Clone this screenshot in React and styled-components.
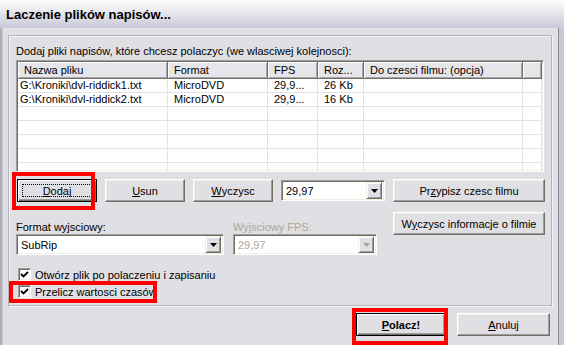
import React from 'react';
import styled, { createGlobalStyle, css } from 'styled-components';

const FONT = `"Liberation Sans", Arial, sans-serif`;

const GlobalStyle = createGlobalStyle`
  html, body {
    margin: 0;
    padding: 0;
    background: #ffffff;
  }
  * {
    box-sizing: border-box;
  }
`;

const Window = styled.div`
  position: relative;
  width: 564px;
  height: 345px;
  overflow: hidden;
  display: flex;
  flex-direction: column;
  font-family: ${FONT};
  font-size: 11px;
  color: #000;
`;

const TitleBar = styled.div`
  height: 28px;
  flex-shrink: 0;
  display: flex;
  align-items: center;
  padding: 1px 0 0 6px;
  border-top-left-radius: 3px;
  border-top-right-radius: 8px;
  background: linear-gradient(to bottom, #fdfdfe 0%, #f1f1f5 25%, #dddde6 62%, #c9c9d6 100%);
  font-weight: bold;
  font-size: 13px;
`;

const Frame = styled.div`
  flex: 1;
  display: flex;
  background: #e0dfe3;
`;

const LeftEdge = styled.div`
  width: 3px;
  background: linear-gradient(to right, #a6a6b2, #c9c9d2);
`;

const RightEdge = styled.div`
  flex: 1;
  border-left: 1px solid #8b8b97;
  background: #c9c9d3;
`;

const Content = styled.div`
  width: 555px;
  padding: 7px 0 0 5px;
  display: flex;
  flex-direction: column;
`;

const Group = styled.div`
  width: 544px;
  height: 271px;
  border: 1px solid #b4b3bb;
  box-shadow: inset 1px 1px 0 #f6f6f8, 1px 1px 0 #f6f6f8;
  padding: 8px 0 0 7px;
  display: flex;
  flex-direction: column;
`;

const Label = styled.div`
  height: 14px;
  line-height: 14px;
  white-space: nowrap;
  color: ${p => (p.$disabled ? '#aca899' : '#000')};
`;

/* ---- list view ---- */

const ListView = styled.div`
  margin-top: 2px;
  width: 528px;
  height: 112px;
  overflow: hidden;
  background: #fff;
  border: 1px solid;
  border-color: #9d9da1 #ffffff #ffffff #9d9da1;
  box-shadow: inset 1px 1px 0 #716f64, inset -1px -1px 0 #f1efe2;
  padding: 1px;
`;

const COLS = '150px 100px 50px 46px 159px 1fr';

const HeaderRow = styled.div`
  display: grid;
  grid-template-columns: ${COLS};
  height: 17px;
`;

const HeaderCell = styled.div`
  background: #e6e5e9;
  border-right: 1px solid #716f64;
  border-bottom: 1px solid #716f64;
  box-shadow: inset 1px 1px 0 #ffffff, inset -1px -1px 0 #a6a5ab;
  padding-left: 6px;
  line-height: 16px;
  white-space: nowrap;
  overflow: hidden;
`;

const Row = styled.div`
  display: grid;
  grid-template-columns: ${COLS};
  height: 14px;
`;

const Cell = styled.div`
  border-right: 1px solid #e3e3e3;
  border-bottom: 1px solid #e3e3e3;
  padding-left: ${p => (p.$first ? 2 : 6)}px;
  line-height: 13px;
  white-space: nowrap;
  overflow: hidden;
`;

/* ---- controls ---- */

const Controls = styled.div`
  margin-top: 7px;
  display: flex;
  gap: 8px;
`;

const LeftCol = styled.div`
  width: 369px;
  display: flex;
  flex-direction: column;
`;

const RightCol = styled.div`
  width: 152px;
  display: flex;
  flex-direction: column;
  gap: 10px;
`;

const ButtonRow = styled.div`
  display: flex;
  align-items: flex-start;
  gap: 8px;
  padding-left: 1px;
`;

const Button = styled.button`
  position: relative;
  width: ${p => p.$w}px;
  height: 23px;
  flex-shrink: 0;
  padding: 0;
  font-family: ${FONT};
  font-size: 11px;
  font-weight: ${p => (p.$bold ? 'bold' : 'normal')};
  color: #000;
  background: #e0dfe3;
  border: 1px solid;
  border-color: #ffffff #716f64 #716f64 #ffffff;
  box-shadow: inset -1px -1px 0 #9d9da1, inset 1px 1px 0 #f1efe2;
  ${p =>
    p.$active &&
    css`
      border: 1px solid #000;
      box-shadow: inset 1px 1px 0 #ffffff, inset -1px -1px 0 #716f64, inset -2px -2px 0 #9d9da1;
    `}
`;

const FocusRect = styled.span`
  position: absolute;
  inset: 4px;
  border: 1px dotted #000;
`;

const Key = styled.span`
  text-decoration: underline;
`;

const Combo = styled.div`
  width: ${p => p.$w}px;
  height: 21px;
  margin-top: ${p => p.$top || 0}px;
  display: flex;
  align-items: center;
  padding: 2px;
  background: #fff;
  border: 1px solid;
  border-color: #9d9da1 #ffffff #ffffff #9d9da1;
  box-shadow: inset 1px 1px 0 #716f64, inset -1px -1px 0 #f1efe2;
`;

const ComboText = styled.span`
  flex: 1;
  padding-left: 2px;
  color: ${p => (p.$disabled ? '#aca899' : '#000')};
`;

const DropButton = styled.span`
  width: 16px;
  height: 17px;
  display: flex;
  align-items: center;
  justify-content: center;
  background: #e0dfe3;
  border: 1px solid;
  border-color: #f1efe2 #716f64 #716f64 #f1efe2;
  box-shadow: inset 1px 1px 0 #ffffff, inset -1px -1px 0 #9d9da1;
`;

const FieldRow = styled.div`
  margin-top: 18px;
  display: flex;
  gap: 9px;
`;

const Field = styled.div`
  display: flex;
  flex-direction: column;
`;

const Checks = styled.div`
  margin-top: 11px;
  display: flex;
  flex-direction: column;
`;

const CheckRow = styled.div`
  height: 17px;
  display: flex;
  align-items: center;
  gap: 4px;
  padding-left: 2px;
`;

const CheckBox = styled.span`
  width: 13px;
  height: 13px;
  display: flex;
  align-items: center;
  justify-content: center;
  background: #fff;
  border: 1px solid;
  border-color: #9d9da1 #ffffff #ffffff #9d9da1;
  box-shadow: inset 1px 1px 0 #716f64, inset -1px -1px 0 #f1efe2;
`;

const Footer = styled.div`
  margin-top: 7px;
  display: flex;
  justify-content: flex-end;
  gap: 11px;
  padding-right: 8px;
`;

const Highlight = styled.div`
  position: absolute;
  left: ${p => p.$x}px;
  top: ${p => p.$y}px;
  width: ${p => p.$w}px;
  height: ${p => p.$h}px;
  border: 4px solid #ff0000;
  pointer-events: none;
`;

const Arrow = ({ disabled }) => (
  <svg width="7" height="4" viewBox="0 0 7 4">
    <polygon points="0,0 7,0 3.5,4" fill={disabled ? '#aca899' : '#000'} />
  </svg>
);

const Check = () => (
  <svg width="9" height="9" viewBox="0 0 9 9">
    <polyline points="1,4 3.5,6.5 8,2" fill="none" stroke="#000" strokeWidth="1.8" />
  </svg>
);

const DropDown = ({ value, w, top, disabled }) => (
  <Combo $w={w} $top={top}>
    <ComboText $disabled={disabled}>{value}</ComboText>
    <DropButton>
      <Arrow disabled={disabled} />
    </DropButton>
  </Combo>
);

const COLUMNS = ['Nazwa pliku', 'Format', 'FPS', 'Roz...', 'Do czesci filmu: (opcja)', ''];

const FILES = [
  ['G:\\Kroniki\\dvl-riddick1.txt', 'MicroDVD', '29,9...', '26 Kb', '', ''],
  ['G:\\Kroniki\\dvl-riddick2.txt', 'MicroDVD', '29,9...', '16 Kb', '', ''],
  ['', '', '', '', '', ''],
  ['', '', '', '', '', ''],
  ['', '', '', '', '', ''],
  ['', '', '', '', '', ''],
  ['', '', '', '', '', ''],
];

const App = () => {
  return (
    <Window>
      <GlobalStyle />
      <TitleBar>Laczenie plików napisów...</TitleBar>

      <Frame>
        <LeftEdge />
        <Content>
          <Group>
            <Label>Dodaj pliki napisów, które chcesz polaczyc (we wlasciwej kolejnosci):</Label>

            <ListView>
              <HeaderRow>
                {COLUMNS.map((c, i) => (
                  <HeaderCell key={i}>{c}</HeaderCell>
                ))}
              </HeaderRow>
              {FILES.map((row, r) => (
                <Row key={r}>
                  {row.map((v, i) => (
                    <Cell key={i} $first={i === 0}>{v}</Cell>
                  ))}
                </Row>
              ))}
            </ListView>

            <Controls>
              <LeftCol>
                <ButtonRow>
                  <Button $w={80} $active>
                    <FocusRect />
                    <Key>D</Key>odaj
                  </Button>
                  <Button $w={80}>
                    <Key>U</Key>sun
                  </Button>
                  <Button $w={80}>
                    <Key>W</Key>yczysc
                  </Button>
                  <DropDown value="29,97" w={104} top={1} />
                </ButtonRow>

                <FieldRow>
                  <Field>
                    <Label>Format wyjsciowy:</Label>
                    <DropDown value="SubRip" w={208} />
                  </Field>
                  <Field>
                    <Label $disabled>Wyjsciowy FPS:</Label>
                    <DropDown value="29,97" w={144} disabled />
                  </Field>
                </FieldRow>
              </LeftCol>

              <RightCol>
                <Button $w={152}>
                  Pr<Key>z</Key>ypisz czesc filmu
                </Button>
                <Button $w={152}>
                  W<Key>y</Key>czysc informacje o filmie
                </Button>
              </RightCol>
            </Controls>

            <Checks>
              <CheckRow>
                <CheckBox>
                  <Check />
                </CheckBox>
                Otwórz plik po polaczeniu i zapisaniu
              </CheckRow>
              <CheckRow>
                <CheckBox>
                  <Check />
                </CheckBox>
                Przelicz wartosci czasów
              </CheckRow>
            </Checks>
          </Group>

          <Footer>
            <Button $w={90} $active $bold>
              <Key>P</Key>olacz!
            </Button>
            <Button $w={93}>
              <Key>A</Key>nuluj
            </Button>
          </Footer>
        </Content>
        <RightEdge />
      </Frame>

      <Highlight $x={12} $y={172} $w={83} $h={38} />
      <Highlight $x={9} $y={281} $w={148} $h={22} />
      <Highlight $x={352} $y={308} $w={96} $h={37} />
    </Window>
  );
};

export default App;
